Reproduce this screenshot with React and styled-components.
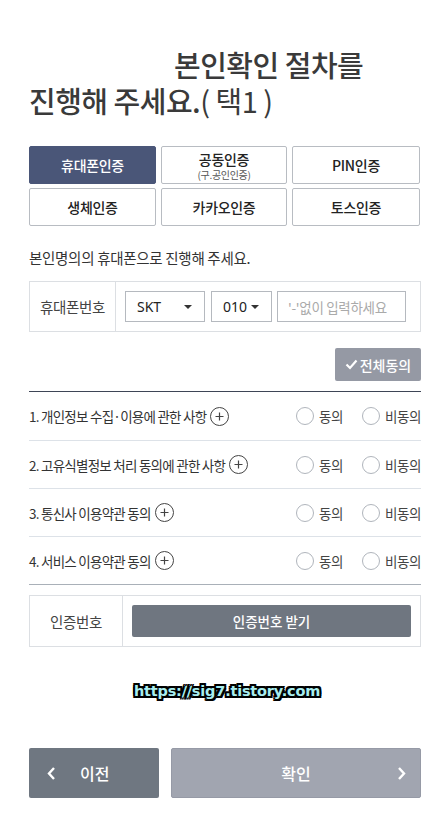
import styled, { createGlobalStyle } from 'styled-components';

const GlobalStyle = createGlobalStyle`
  html, body {
    margin: 0;
    padding: 0;
    background: #fff;
  }
  body {
    font-family: "Noto Sans CJK KR", "Noto Sans", sans-serif;
    color: #333;
  }
  * { box-sizing: border-box; }
`;

const Page = styled.div`
  width: 447px;
  padding: 46px 26px 0 29px;
`;

const Title = styled.h1`
  margin: 0;
  font-size: 29px;
  line-height: 36px;
  font-weight: 500;
  color: #3a3a3a;
  letter-spacing: -0.5px;
`;

const Indent = styled.span`
  display: inline-block;
  width: 145px;
`;

const Light = styled.span`
  font-weight: 400;
`;

const MethodGrid = styled.div`
  display: grid;
  grid-template-columns: 127px 126px 128px;
  column-gap: 5px;
  row-gap: 4px;
  margin-top: 28px;
`;

const MethodButton = styled.button`
  height: 38px;
  border: 1px solid ${(p) => (p.$active ? '#4a5678' : '#b8bcc2')};
  background: ${(p) => (p.$active ? '#4a5678' : '#fff')};
  color: ${(p) => (p.$active ? '#fff' : '#222')};
  border-radius: 2px;
  font-family: inherit;
  font-size: 14px;
  font-weight: 500;
  letter-spacing: -0.3px;
  padding: 0;
  display: flex;
  flex-direction: column;
  align-items: center;
  justify-content: center;
  line-height: 18px;
`;

const SubLabel = styled.span`
  font-size: 10px;
  line-height: 13px;
  font-weight: 400;
  color: #555;
`;

const Desc = styled.p`
  margin: 22px 0 0;
  font-size: 14.5px;
  line-height: 20px;
  color: #333;
  letter-spacing: -0.3px;
`;

const FormBox = styled.div`
  display: flex;
  border: 1px solid #dcdfe3;
  margin-top: ${(p) => p.$mt}px;
`;

const LabelCell = styled.div`
  width: ${(p) => p.$w}px;
  flex: none;
  display: flex;
  align-items: center;
  justify-content: center;
  border-right: 1px solid #dcdfe3;
  font-size: 14.5px;
  color: #444;
  letter-spacing: -0.3px;
`;

const FieldCell = styled.div`
  flex: 1;
  display: flex;
  align-items: center;
  padding: 9px ${(p) => p.$pr}px 9px 9px;
`;

const Select = styled.div`
  width: ${(p) => p.$w}px;
  height: 31px;
  margin-right: ${(p) => p.$mr}px;
  border: 1px solid #b5b9bf;
  display: flex;
  align-items: center;
  justify-content: space-between;
  padding: 0 12px 0 11px;
  font-size: 14px;
  color: #222;
  font-family: "Noto Sans", "Noto Sans CJK KR", sans-serif;
`;

const Caret = styled.span`
  width: 0;
  height: 0;
  border-left: 4px solid transparent;
  border-right: 4px solid transparent;
  border-top: 4px solid #333;
`;

const Input = styled.input`
  width: 129px;
  height: 31px;
  border: 1px solid #b5b9bf;
  padding: 0 10px;
  font-family: inherit;
  font-size: 13.5px;
  letter-spacing: -0.3px;
  outline: none;
  &::placeholder { color: #aaa; }
`;

const AllRow = styled.div`
  display: flex;
  justify-content: flex-end;
  margin-top: 16px;
`;

const AllButton = styled.button`
  width: 86px;
  height: 33px;
  border: none;
  border-radius: 2px;
  background: #9599a4;
  color: #fff;
  font-family: inherit;
  font-size: 14px;
  font-weight: 500;
  padding: 0;
  display: flex;
  align-items: center;
  justify-content: center;
  gap: 2px;
`;

const TermsList = styled.div`
  margin-top: 10px;
  border-top: 1px solid #3e4556;
  border-bottom: 1px solid #a9b0b8;
`;

const TermRow = styled.div`
  height: 48px;
  display: flex;
  align-items: center;
  border-top: ${(p) => (p.$first ? 'none' : '1px solid #dde2e8')};
`;

const TermText = styled.span`
  font-size: 13.5px;
  color: #333;
  letter-spacing: -0.75px;
`;

const PlusIcon = styled.span`
  width: 19px;
  height: 19px;
  border: 1.3px solid #444;
  border-radius: 50%;
  margin-left: 4px;
  display: inline-flex;
  align-items: center;
  justify-content: center;
  flex: none;
`;

const Choices = styled.div`
  margin-left: auto;
  display: flex;
  align-items: center;
`;

const Choice = styled.label`
  display: flex;
  align-items: center;
  gap: 5px;
  margin-left: ${(p) => p.$ml || 0}px;
  font-size: 13.5px;
  color: #444;
  letter-spacing: -0.4px;
`;

const Radio = styled.span`
  width: 18px;
  height: 18px;
  border: 1px solid #b0b5bc;
  border-radius: 50%;
  flex: none;
`;

const CodeButton = styled.button`
  flex: 1;
  height: 32px;
  border: none;
  border-radius: 2px;
  background: #6f7680;
  color: #fff;
  font-family: inherit;
  font-size: 13.5px;
  font-weight: 500;
`;

const Watermark = styled.div`
  margin-top: 34px;
  text-align: center;
  font-family: "DejaVu Sans", sans-serif;
  font-weight: bold;
  font-size: 14.5px;
  line-height: 20px;
  color: #a8eef0;
  letter-spacing: -0.2px;
  padding-left: 4px;
  text-shadow:
    2px 0 0 #000, -2px 0 0 #000, 0 2px 0 #000, 0 -2px 0 #000,
    2px 2px 0 #000, -2px -2px 0 #000, 2px -2px 0 #000, -2px 2px 0 #000;
`;

const Footer = styled.div`
  display: flex;
  gap: 12px;
  margin-top: 47px;
`;

const NavButton = styled.button`
  position: relative;
  height: 50px;
  width: ${(p) => (p.$grow ? 'auto' : '130px')};
  flex: ${(p) => (p.$grow ? 1 : 'none')};
  border: ${(p) => (p.$grow ? '1px solid #969aa6' : 'none')};
  border-radius: 2px;
  background: ${(p) => (p.$grow ? '#a1a5b0' : '#6f7781')};
  color: #fff;
  font-family: inherit;
  font-size: 16px;
  font-weight: 500;
  display: flex;
  align-items: center;
  justify-content: ${(p) => (p.$grow ? 'center' : 'flex-start')};
  padding: 0 0 0 ${(p) => (p.$grow ? 0 : 18)}px;
`;

const Chevron = styled.svg`
  flex: none;
`;

const RightChevron = styled.svg`
  position: absolute;
  right: 14px;
  top: 17px;
`;

const PrevLabel = styled.span`
  margin-left: 24px;
`;

const terms = [
  '1. 개인정보 수집·이용에 관한 사항',
  '2. 고유식별정보 처리 동의에 관한 사항',
  '3. 통신사 이용약관 동의',
  '4. 서비스 이용약관 동의',
];

const Plus = () => (
  <PlusIcon>
    <svg width="9" height="9" viewBox="0 0 9 9">
      <path d="M4.5 0.5v8M0.5 4.5h8" stroke="#444" strokeWidth="1.2" />
    </svg>
  </PlusIcon>
);

export default function App() {
  return (
    <>
      <GlobalStyle />
      <Page>
        <Title>
          <Indent />본인확인 절차를
          <br />
          진행해 주세요.<Light>( 택1 )</Light>
        </Title>

        <MethodGrid>
          <MethodButton $active>휴대폰인증</MethodButton>
          <MethodButton>
            공동인증
            <SubLabel>(구.공인인증)</SubLabel>
          </MethodButton>
          <MethodButton>PIN인증</MethodButton>
          <MethodButton>생체인증</MethodButton>
          <MethodButton>카카오인증</MethodButton>
          <MethodButton>토스인증</MethodButton>
        </MethodGrid>

        <Desc>본인명의의 휴대폰으로 진행해 주세요.</Desc>

        <FormBox $mt={13}>
          <LabelCell $w={86}>휴대폰번호</LabelCell>
          <FieldCell $pr={14}>
            <Select $w={80} $mr={6}>
              SKT
              <Caret />
            </Select>
            <Select $w={61} $mr={5}>
              010
              <Caret />
            </Select>
            <Input placeholder="'-'없이 입력하세요" />
          </FieldCell>
        </FormBox>

        <AllRow>
          <AllButton>
            <svg width="13" height="11" viewBox="0 0 13 11">
              <path d="M1.5 5.5l3.5 3.5 6.5-7.5" stroke="#fff" strokeWidth="2.2" fill="none" />
            </svg>
            전체동의
          </AllButton>
        </AllRow>

        <TermsList>
          {terms.map((t, i) => (
            <TermRow key={t} $first={i === 0}>
              <TermText>{t}</TermText>
              <Plus />
              <Choices>
                <Choice>
                  <Radio />
                  동의
                </Choice>
                <Choice $ml={19}>
                  <Radio />
                  비동의
                </Choice>
              </Choices>
            </TermRow>
          ))}
        </TermsList>

        <FormBox $mt={10}>
          <LabelCell $w={93}>인증번호</LabelCell>
          <FieldCell $pr={9}>
            <CodeButton>인증번호 받기</CodeButton>
          </FieldCell>
        </FormBox>

        <Watermark>https://sig7.tistory.com</Watermark>

        <Footer>
          <NavButton>
            <Chevron width="9" height="15" viewBox="0 0 9 15">
              <path d="M7 2L2 7.5 7 13" stroke="#fff" strokeWidth="2.4" fill="none" />
            </Chevron>
            <PrevLabel>이전</PrevLabel>
          </NavButton>
          <NavButton $grow>
            확인
            <RightChevron width="9" height="15" viewBox="0 0 9 15">
              <path d="M2 2l5 5.5L2 13" stroke="#fff" strokeWidth="2.4" fill="none" />
            </RightChevron>
          </NavButton>
        </Footer>
      </Page>
    </>
  );
}
